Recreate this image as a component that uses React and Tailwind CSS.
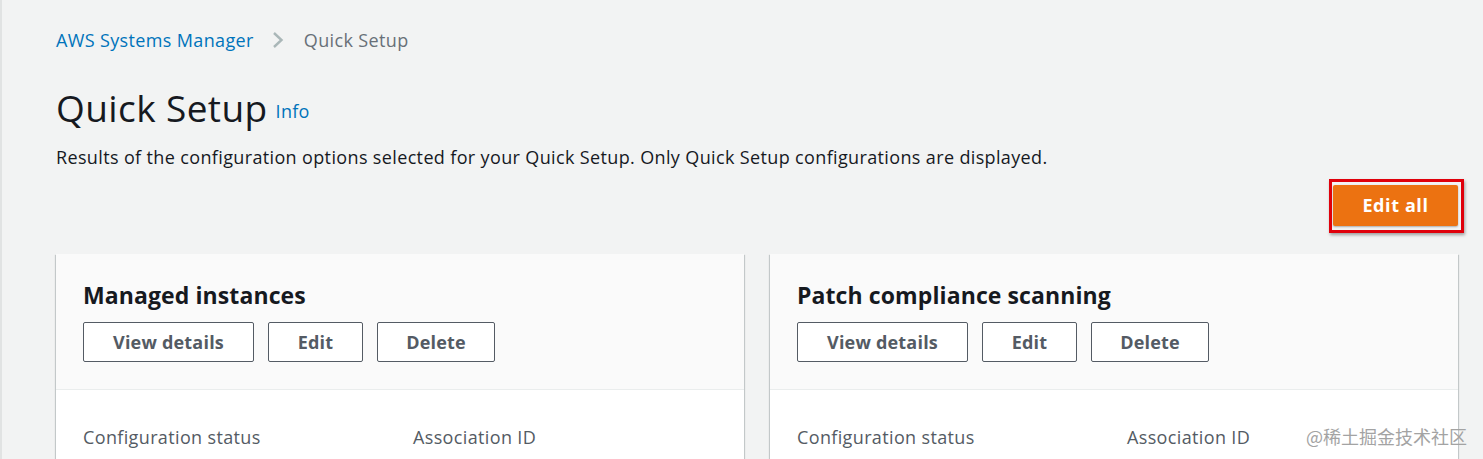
import React from "react";

const font = { fontFamily: '"Open Sans", "Noto Sans", Arial, sans-serif' };

function OutlineButton({ children, w }) {
  return (
    <button
      className={`h-[40px] ${w} rounded-[2px] border border-[#545b64] bg-white text-[18px] font-bold text-[#545b64] tracking-[0.2px]`}
    >
      {children}
    </button>
  );
}

function Card({ title }) {
  return (
    <div className="flex-1 bg-white shadow-[0_1px_1px_0_rgba(0,28,36,0.3),1px_1px_1px_0_rgba(0,28,36,0.15),-1px_1px_1px_0_rgba(0,28,36,0.15)]">
      <div className="bg-[#fafafa] px-[27px] pt-[26px] pb-[27px] border-b border-[#eaeded]">
        <h2 className="text-[23px] leading-[30px] font-bold text-[#16191f] tracking-[0.1px]">{title}</h2>
        <div className="mt-[12px] flex gap-[14px]">
          <OutlineButton w="w-[171px]">View details</OutlineButton>
          <OutlineButton w="w-[95px]">Edit</OutlineButton>
          <OutlineButton w="w-[118px]">Delete</OutlineButton>
        </div>
      </div>
      <div className="px-[27px] pt-[35px] pb-[20px] flex text-[18px] leading-[24px] tracking-[0.36px] text-[#545b64]">
        <div className="w-[330px]">Configuration status</div>
        <div>Association ID</div>
      </div>
    </div>
  );
}

export default function App() {
  return (
    <div
      className="relative w-full h-[459px] overflow-hidden bg-[#f2f3f3] border-l-2 border-[#e1e3e3] pl-[54px] pr-[25px]"
      style={font}
    >
      <nav className="pt-[28px] flex items-center text-[18px] leading-[24px] tracking-[0.36px]">
        <span className="text-[#0073bb]">AWS Systems Manager</span>
        <svg className="ml-[18px] mr-[20px]" width="12" height="18" viewBox="0 0 12 18">
          <path d="M2 2 L9.5 9 L2 16" fill="none" stroke="#aab7b8" strokeWidth="2.4" />
        </svg>
        <span className="text-[#687078]">Quick Setup</span>
      </nav>

      <div className="mt-[34px] flex items-baseline">
        <h1 className="text-[37px] leading-[44px] text-[#16191f] font-normal tracking-[0.4px]">Quick Setup</h1>
        <span className="relative -top-[4px] ml-[8px] text-[18px] font-medium text-[#0073bb] tracking-[0.3px]">Info</span>
      </div>

      <p className="mt-[15px] text-[18px] leading-[24px] tracking-[0.36px] text-[#16191f]">
        Results of the configuration options selected for your Quick Setup. Only Quick Setup
        configurations are displayed.
      </p>

      <div className="mt-[16px] flex justify-end">
        <div className="relative">
          <button className="w-[125px] h-[41px] rounded-[2px] bg-[#ec7211] text-white text-[18px] font-bold tracking-[0.6px] shadow-[0_1px_2px_rgba(0,0,0,0.3)]">
            Edit all
          </button>
          <div className="absolute -left-[4px] -right-[6px] -top-[6px] -bottom-[7px] border-[3px] border-[#e0000b] shadow-[1px_2px_3px_rgba(0,0,0,0.35)] pointer-events-none" />
        </div>
      </div>

      <div className="mt-[28px] flex gap-[26px]">
        <Card title="Managed instances" />
        <Card title="Patch compliance scanning" />
      </div>

      <div
        className="absolute right-[16px] top-[423px] text-[18px] text-[#a3a3a3]"
        style={{ fontFamily: '"Noto Sans CJK SC", "Noto Sans", sans-serif' }}
      >
        @稀土掘金技术社区
      </div>
    </div>
  );
}
